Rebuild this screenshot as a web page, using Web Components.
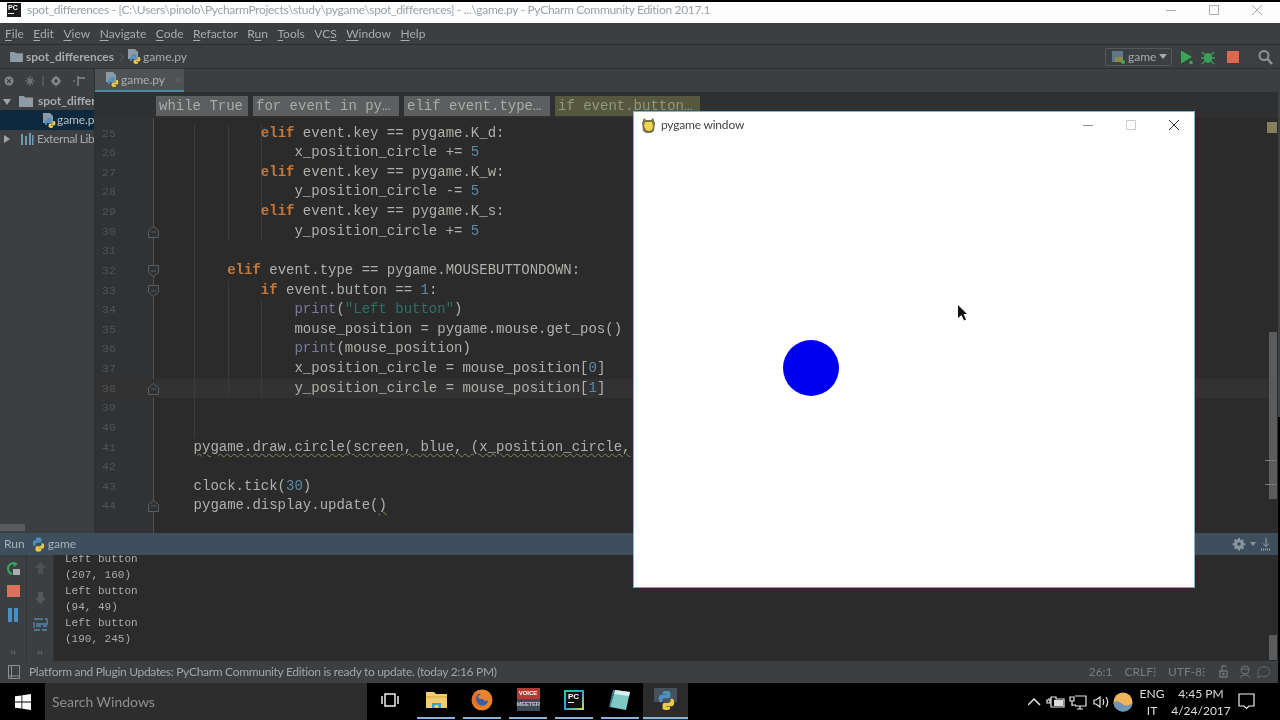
<!DOCTYPE html>
<html>
<head>
<meta charset="utf-8">
<title>PyCharm</title>
<style>
    html, body { margin: 0; padding: 0; background: #000; }
    body { width: 1280px; height: 720px; overflow: hidden; position: relative; font-family: Lato, "Open Sans", sans-serif; }
    #ide-main { display: flex; height: 464px; }
    #edge { position: absolute; left: 1278px; top: 92px; width: 2px; height: 591px; background: linear-gradient(#3f4143 55%, #000 55%); z-index: 5; }
</style>
</head>
<body>
    <ide-title></ide-title>
    <ide-menu></ide-menu>
    <ide-nav></ide-nav>
    <div id="ide-main">
        <ide-project></ide-project>
        <ide-editor></ide-editor>
    </div>
    <ide-run></ide-run>
    <ide-status></ide-status>
    <win-taskbar></win-taskbar>
    <pygame-window></pygame-window>
    <div id="edge"></div>

<script>
const define = (name, html) => {
    customElements.define(name, class extends HTMLElement {
        constructor(){
            super();
            const template = document.createElement('template');
            template.innerHTML = html;
            this.attachShadow({mode:'open'}).appendChild(template.content.cloneNode(true));
        }
    });
};

const uiFont = `Lato, "Open Sans", sans-serif`;
const monoFont = `"Liberation Mono", monospace`;

// small python logo, used all over the place
const pyLogo = (size) => `<svg width="${size}" height="${size}" viewBox="0 0 24 24" style="display:block;flex:none">
    <path fill="#4f8fc0" d="M11.9 2C8 2 8.2 3.7 8.2 3.7V5.5H12v.5H6.7S4 5.7 4 9.9s2.3 4 2.3 4h1.4v-2s-.1-2.3 2.3-2.3h3.9s2.2 0 2.2-2.2V4.3S16.4 2 11.9 2z"/>
    <path fill="#e8c94a" d="M12.1 22c3.9 0 3.7-1.7 3.7-1.7v-1.8H12V18h5.3s2.7.3 2.7-3.9-2.3-4-2.3-4h-1.4v2s.1 2.3-2.3 2.3H10.1s-2.2 0-2.2 2.2v3.7S7.6 22 12.1 22z"/>
</svg>`;

const pyFile = `<svg width="16" height="17" viewBox="0 0 16 17" style="display:block;flex:none">
    <path fill="#8a9aa6" d="M2 1h7l3 3v7H2z"/>
    <path fill="#4f8fc0" d="M8 6c-2 0-2 1-2 1v1h2v.4H5s-1.400 0-1.400 2.300 1.300 2.300 1.300 2.300h1v-1.200s0-1.300 1.300-1.300h2s1.200 0 1.200-1.200V7.200S10 6 8 6z"/>
    <path fill="#e8c94a" d="M10 16c2 0 2-1 2-1v-1h-2v-.4h3s1.400 0 1.400-2.300-1.300-2.300-1.300-2.300h-1v1.200s0 1.300-1.300 1.300h-2s-1.200 0-1.200 1.200v2.100S8 16 10 16z"/>
</svg>`;

const folder = (w, h) => `<svg width="${w}" height="${h}" viewBox="0 0 14 12" style="display:block;flex:none">
    <path fill="#8f9ca6" d="M0 1h5l1 1.500h8V12H0z"/>
</svg>`;

const gear = (c, s) => `<svg width="${s}" height="${s}" viewBox="0 0 16 16" style="display:block;flex:none">
    <path fill="${c}" d="M7 1h2l.4 2 1.300.6 1.700-1.100 1.400 1.400-1.100 1.700.6 1.300 2 .4v2l-2 .4-.6 1.300 1.100 1.700-1.400 1.400-1.700-1.100-1.300.6-.4 2H7l-.4-2-1.300-.6-1.700 1.100-1.400-1.400 1.100-1.700-.6-1.300-2-.4V7l2-.4.6-1.300-1.100-1.700 1.400-1.400 1.700 1.100 1.300-.6z"/>
    <circle cx="8" cy="8" r="2" fill="#3f4e5d"/>
</svg>`;

define('ide-title', `
    <style>
        :host { display: block; height: 21px; margin-top: 2px; background: #fdfdfd; }
        #bar { display: flex; align-items: center; box-sizing: border-box; height: 100%; padding: 0 18px 6px 7px; font: 12px/1 ${uiFont}; color: #9aa3a8; filter: blur(.35px); }
        #logo { width: 14px; height: 14px; background: #1d1d1d; color: #fff; font: bold 7px/9px "Liberation Sans", sans-serif; margin-right: 6px; flex: none; }
        #logo span { display: block; padding-left: 1px; }
        #logo i { display: block; width: 6px; height: 1px; background: #fff; margin: 1px 0 0 1px; }
        #text { flex: 1; white-space: nowrap; letter-spacing: -.32px; }
        #bar svg { display: block; flex: none; }
    </style>
    <div id="bar">
        <div id="logo"><span>PC</span><i></i></div>
        <div id="text">spot_differences - [C:\\Users\\pinolo\\PycharmProjects\\study\\pygame\\spot_differences] - ...\\game.py - PyCharm Community Edition 2017.1</div>
        <svg width="96" height="12" viewBox="0 0 96 12" fill="none" stroke="#a9adb0">
            <path d="M0 6.500h10"/><path d="M43.500 1.500h9v9h-9z"/><path d="M86 1l10 10M96 1L86 11"/>
        </svg>
    </div>
`);

define('ide-menu', `
    <style>
        :host { display: block; height: 21px; background: #3c3f41; }
        #bar { display: flex; align-items: center; gap: 9.500px; height: 100%; padding-left: 5px; font: 12px/1 ${uiFont}; color: #a6abae; filter: blur(.3px); }
        u { text-decoration-thickness: 1px; text-underline-offset: 2px; }
    </style>
    <div id="bar">
        <span><u>F</u>ile</span><span><u>E</u>dit</span><span><u>V</u>iew</span><span><u>N</u>avigate</span><span><u>C</u>ode</span><span><u>R</u>efactor</span><span>R<u>u</u>n</span><span><u>T</u>ools</span><span>VC<u>S</u></span><span><u>W</u>indow</span><span><u>H</u>elp</span>
    </div>
`);

define('ide-nav', `
    <style>
        :host { display: block; height: 25px; box-sizing: border-box; background: #3c3f41; border-top: 1px solid #2a2c2d; border-bottom: 1px solid #2f3132; }
        #bar { display: flex; align-items: center; height: 100%; padding-left: 10px; font: 12px/1 ${uiFont}; color: #a6abae; filter: blur(.3px); }
        b { font-weight: 700; margin-left: 3px; }
        .chev { width: 5px; height: 5px; border: solid #50535a; border-width: 1px 1px 0 0; transform: rotate(45deg); margin: 0 3px; flex: none; }
        #crumb { margin-left: 1px; margin-right: auto; }
        #cfg { display: flex; align-items: center; gap: 3px; box-sizing: border-box; width: 67px; height: 18px; padding-left: 5px; border: 1px solid #55585a; border-radius: 2px; color: #a6abae; }
        #cfg i { width: 0; height: 0; border: 4px solid transparent; border-top: 5px solid #a6abae; border-bottom: 0; }
        #act { display: flex; align-items: center; margin-left: 6px; }
    </style>
    <div id="bar">
        ${folder(13,11)}
        <b>spot_differences</b>
        <span class="chev"></span>
        ${pyFile}
        <span id="crumb">game.py</span>
        <div id="cfg">
            <svg width="14" height="14" viewBox="0 0 14 14" style="display:block;flex:none"><rect x="1" y="1" width="11" height="11" fill="#5f7688"/><path d="M4 12V7h8v5z" fill="#8b8a4a"/><circle cx="12" cy="12" r="2" fill="#3fae4a"/></svg>
            <span>game</span><i></i>
        </div>
        <div id="act">
            <svg width="102" height="16" viewBox="0 0 102 16" style="display:block">
                <path d="M3 1.500l11 6.500-11 6.500z" fill="#3aa84e"/><circle cx="13" cy="13.500" r="1.800" fill="#3aa84e"/>
                <ellipse cx="30" cy="9" rx="4.200" ry="5" fill="#3c9f58"/><path d="M24 3l3 3M36 3l-3 3M23 9h3M34 9h3M24 15l3-3M36 15l-3-3" stroke="#3c9f58" stroke-width="1.300"/>
                <rect x="49" y="2" width="12" height="12" fill="#d9694f"/>
                <path d="M70 0v16" stroke="#4b4e50" stroke-dasharray="1 2"/>
                <circle cx="86" cy="6.500" r="4.500" fill="none" stroke="#8d9295" stroke-width="2"/><path d="M89.500 10l4.500 5" stroke="#8d9295" stroke-width="2.500"/>
            </svg>
        </div>
    </div>
`);

define('ide-project', `
    <style>
        :host { display: flex; flex-direction: column; width: 95px; flex: none; background: #3c3f41; overflow: hidden; font: 12px/1 ${uiFont}; color: #a6abae; border-right: 1px solid #2f3132; box-sizing: border-box; }
        #tools { display: flex; align-items: center; height: 23px; flex: none; gap: 5px; padding-left: 2px; }
        #tree { flex: 1; filter: blur(.3px); white-space: nowrap; }
        .row { display: flex; align-items: center; height: 18px; }
        .sel { background: #0d293e; color: #b8bfc4; height: 20px; padding-left: 41px; }
        .tri { width: 0; height: 0; flex: none; }
        .down { border: 4px solid transparent; border-top: 6px solid #a0a5a8; border-bottom: 0; margin: 2px 8px 0 3px; }
        .right { border: 4px solid transparent; border-left: 6px solid #a0a5a8; border-right: 0; margin: 0 10px 0 4px; }
        b { font-weight: 700; }
        #foot { height: 9px; flex: none; }
        #foot i { display: block; width: 25px; height: 7px; background: #585b5d; }
    </style>
    <div id="tools">
        <svg width="88" height="16" viewBox="0 0 88 16" fill="none" stroke="#83888b" style="display:block">
            <circle cx="7" cy="8" r="4.500" fill="#83888b" stroke="none"/><path d="M5 6l4 4M9 6l-4 4" stroke="#3c3f41" stroke-width="1.200"/>
            <path d="M28 3v10M23 8h10M25 5l6 6M31 5l-6 6" stroke-width="1.200" opacity=".75"/>
            <path d="M41 3v10" stroke="#6a6e70"/>
            <circle cx="54" cy="8" r="3" stroke-width="2.500"/><path d="M54 2.500v2M54 11.500v2M48.500 8h2M57.500 8h2"/>
            <path d="M76 3v10M76 5h7" stroke-width="1.400"/>
            <path d="M73 8h-2" />
        </svg>
    </div>
    <div id="tree">
        <div class="row"><i class="tri down"></i>${folder(14,12)}<b style="margin-left:5px">spot_differ</b></div>
        <div class="row sel">${pyFile}<span style="margin-left:0;letter-spacing:-.1px">game.p</span></div>
        <div class="row"><i class="tri right"></i><svg width="14" height="12" viewBox="0 0 14 12" style="display:block;flex:none;margin-right:3px"><path d="M1 1h2v11H1zM5 3h2v9H5zM9 0h2v12H9zM12 2h1.500v10H12z" fill="#6f97ad"/></svg><span style="letter-spacing:-.4px">External Lib</span></div>
    </div>
    <div id="foot"><i></i></div>
`);

define('ide-tabs', `
    <style>
        :host { display: block; height: 23px; background: #3c3f41; }
        #tab { display: flex; align-items: center; box-sizing: border-box; width: 89px; height: 23px; padding-left: 9px; background: #4e5254; border-bottom: 2px solid #4a88a8; font: 12px/1 ${uiFont}; color: #a9aeb1; filter: blur(.3px); }
        span { margin-left: 1px; }
        svg.x { margin-left: 9px; }
    </style>
    <div id="tab">${pyFile}<span>game.py</span>
        <svg class="x" width="8" height="8" viewBox="0 0 8 8" stroke="#63676a"><path d="M1 1l6 6M7 1L1 7"/></svg>
    </div>
`);

define('ide-crumb', `
    <style>
        :host { display: block; height: 20px; box-sizing: border-box; padding: 0 3px; background: var(--crumb-bg, #5c5e5f); color: var(--crumb-fg, #a7adaa); font: 14px/21px ${monoFont}; white-space: nowrap; }
    </style>
    <slot></slot>
`);

// every code line: [number, fold marker, guides, html]
const kw = (t) => `<b class="k">${t}</b>`, num = (t) => `<span class="n">${t}</span>`;
const lines = [
    [25, '', 3, `            ${kw('elif')} event.key == pygame.K_d:`],
    [26, '', 3, `                x_position_circle += ${num(5)}`],
    [27, '', 3, `            ${kw('elif')} event.key == pygame.K_w:`],
    [28, '', 3, `                y_position_circle -= ${num(5)}`],
    [29, '', 3, `            ${kw('elif')} event.key == pygame.K_s:`],
    [30, 'u', 3, `                y_position_circle += ${num(5)}`],
    [31, '', 1, ``],
    [32, 'd', 1, `        ${kw('elif')} event.type == pygame.MOUSEBUTTONDOWN:`],
    [33, 'd', 2, `            ${kw('if')} event.button == ${num(1)}:`],
    [34, '', 3, `                <span class="p">print</span>(<span class="s">"Left button"</span>)`],
    [35, '', 3, `                mouse_position = pygame.mouse.get_pos()`],
    [36, '', 3, `                <span class="p">print</span>(mouse_position)`],
    [37, '', 3, `                x_position_circle = mouse_position[${num(0)}]`],
    [38, 'u', 3, `                y_position_circle = mouse_position[${num(1)}]`],
    [39, '', 1, ``],
    [40, '', 1, ``],
    [41, '', 0, `    <span class="w">pygame.draw.circle(screen, blue, (x_position_circle,</span>`],
    [42, '', 0, ``],
    [43, '', 0, `    clock.tick(${num(30)})`],
    [44, 'u', 0, `    pygame.display.update(<span class="w">)</span>`],
];
const guideBg = (n) => {
    const g = [34, 67.500, 101].slice(0, n);
    return g.map(x => `linear-gradient(#3a3b3c,#3a3b3c) ${x}px 0/1px 100% no-repeat`).join(',') || 'none';
};
const foldMark = (f) => f ? `<svg class="f" width="11" height="12" viewBox="0 0 11 12" fill="#2f3132" stroke="#5a5e60"><path d="${f == 'u' ? 'M.5 11.500v-7l5-4 5 4v7z' : 'M.5 .5h10v7l-5 4-5-4z'}"/><path d="M3 6h5"/></svg>` : '';
const codeHtml = lines.map(([n, f, g, html]) => `
    <div class="line${n == 38 ? ' cur' : ''}">
        <div class="num">${n}</div>
        <div class="fold">${foldMark(f)}</div>
        <div class="code" style="background:${guideBg(g)}">${html}</div>
    </div>`).join('');

define('ide-code', `
    <style>
        :host { display: block; position: relative; flex: 1; overflow: hidden; padding-top: 5.500px; background: #2b2b2b; font: 14px/19.630px ${monoFont}; color: #aeb1ab; }
        :host::before { content: ""; position: absolute; left: 0; top: 0; bottom: 0; width: 59px; background: #303234; }
        :host::after { content: ""; position: absolute; left: 58px; top: 0; bottom: 0; width: 1px; background: #505355; }
        #lines { position: relative; z-index: 1; filter: blur(.35px); }
        .line { display: flex; height: 19.630px; }
        .cur { background: #323232; }
        .num { width: 44px; flex: none; box-sizing: border-box; padding-left: 7px; font-size: 11.500px; line-height: 17px; padding-top: 1px; color: #505456; }
        .fold { width: 21px; flex: none; position: relative; }
        .f { position: absolute; left: 9px; top: 4px; z-index: 2; }
        .code { flex: 1; white-space: pre; }
        .k { color: #c4773a; font-weight: bold; }
        .n { color: #5f8ba8; }
        .p { color: #7a7a9a; }
        .s { color: #2a7268; }
        .w { text-decoration: underline wavy #84845a 1px; text-underline-offset: 2px; }
        #mark { position: absolute; right: 3px; top: 4px; width: 10px; height: 11px; background: #857f5c; z-index: 3; }
        #thumb { position: absolute; right: 3px; top: 214px; width: 8px; height: 167px; background: #5a5b5c; z-index: 3; }
        #thumb i { display: block; position: absolute; left: -4px; width: 12px; height: 1px; background: #7a7b7c; }
    </style>
    <div id="lines">${codeHtml}</div>
    <div id="mark"></div>
    <div id="thumb"><i style="top:128px"></i><i style="top:152px"></i></div>
`);

define('ide-editor', `
    <style>
        :host { display: flex; flex-direction: column; flex: 1; min-width: 0; background: #2b2b2b; }
        #crumbs { display: flex; gap: 5px; height: 26px; box-sizing: border-box; padding: 4px 0 0 61px; flex: none; background: #2e3031; filter: blur(.35px); }
    </style>
    <ide-tabs></ide-tabs>
    <div id="crumbs">
        <ide-crumb style="width:92px">while True</ide-crumb>
        <ide-crumb style="width:146px">for event in py…</ide-crumb>
        <ide-crumb style="width:146px">elif event.type…</ide-crumb>
        <ide-crumb style="width:145px;--crumb-bg:#55573f;--crumb-fg:#94977f">if event.button…</ide-crumb>
    </div>
    <ide-code></ide-code>
`);

define('ide-run', `
    <style>
        :host { display: flex; flex-direction: column; height: 128px; background: #2b2b2b; }
        #head { display: flex; align-items: center; height: 22px; flex: none; padding: 0 8px 0 4px; background: #3f4e5d; font: 12px/1 ${uiFont}; color: #a6b0b8; filter: blur(.3px); }
        #head span:nth-child(2) { margin: 0 1px 0 5px; }
        #right { margin-left: auto; display: flex; align-items: center; gap: 4px; }
        #right i { width: 0; height: 0; border: 3px solid transparent; border-top: 4px solid #8a949c; border-bottom: 0; }
        #body { display: flex; flex: 1; min-height: 0; }
        .col { display: flex; flex-direction: column; align-items: center; box-sizing: border-box; width: 27px; flex: none; background: #3c3f41; border-right: 1px solid #333; padding-top: 6px; gap: 7px; }
        .col .more { margin-top: auto; margin-bottom: 5px; font: 10px/10px ${uiFont}; color: #7e8386; }
        #out { flex: 1; position: relative; overflow: hidden; font: 11px/16px ${monoFont}; color: #a9aca6; filter: blur(.3px); }
        #text { margin: -4px 0 0 11px; white-space: pre; }
        #thumb { position: absolute; right: 3px; bottom: 1px; width: 8px; height: 25px; background: #5a5b5c; }
    </style>
    <div id="head">
        <span>Run</span><span>${pyLogo(17)}</span><span>game</span>
        <div id="right">
            ${gear('#8a949c', 14)}<i></i>
            <svg width="12" height="14" viewBox="0 0 12 14" stroke="#9aa3aa" fill="none" style="display:block"><path d="M6 1v8M3 6.500L6 9.500l3-3"/><path d="M1 12.500h10" stroke-width="2" stroke-dasharray="1 1"/></svg>
        </div>
    </div>
    <div id="body">
        <div class="col">
            <svg width="16" height="16" viewBox="0 0 16 16" fill="none" style="display:block"><path d="M12 3.500A5.500 5.500 0 1 0 7 13" stroke="#3aa35c" stroke-width="2.200"/><path d="M8.500 1v5l4-2.500z" fill="#3aa35c"/><rect x="8" y="8" width="7" height="6" fill="#a9aeb1"/></svg>
            <svg width="13" height="13" viewBox="0 0 13 13" style="display:block;margin-top:1px"><rect width="13" height="12" fill="#d9735c"/></svg>
            <svg width="12" height="14" viewBox="0 0 12 14" style="display:block;margin-top:3px"><path d="M1 0h4v14H1zM7 0h4v14H7z" fill="#4a8fbf"/></svg>
            <span class="more">››</span>
        </div>
        <div class="col">
            <svg width="13" height="14" viewBox="0 0 13 14" style="display:block"><path d="M6.500 1L12 7H9v6H4V7H1z" fill="#4d5153"/></svg>
            <svg width="13" height="14" viewBox="0 0 13 14" style="display:block;margin-top:9px"><path d="M6.500 13L12 7H9V1H4v6H1z" fill="#55595b"/></svg>
            <svg width="15" height="14" viewBox="0 0 15 14" fill="none" stroke="#4f89ad" stroke-width="1.300" style="display:block;margin-top:6px"><path d="M1 1h9M12 1h2v5H3M1 4v6M3 8h5M10 8h4M1 12h6M9 12h5"/></svg>
            <span class="more">››</span>
        </div>
        <div id="out"><div id="text">Left button
(207, 160)
Left button
(94, 49)
Left button
(190, 245)</div><div id="thumb"></div></div>
    </div>
`);

define('ide-status', `
    <style>
        :host { display: flex; align-items: center; height: 22px; padding: 0 0 0 8px; background: #3c3f41; font: 12px/1 ${uiFont}; color: #8f9598; filter: blur(.3px); }
        #msg { margin-left: 9px; color: #a0a5a8; white-space: nowrap; letter-spacing: -.31px; }
        #right { margin-left: auto; display: flex; align-items: center; gap: 12px; padding-right: 6px; color: #777c7f; }
        #right svg { display: block; }
    </style>
    <svg width="12" height="14" viewBox="0 0 12 14" fill="none" stroke="#8a8f92" style="display:block;flex:none"><path d="M.5 .5h11v13H.5zM3.500 .5v13M.5 11h11"/></svg>
    <span id="msg">Platform and Plugin Updates: PyCharm Community Edition is ready to update. (today 2:16 PM)</span>
    <div id="right">
        <span>26:1</span><span>CRLF⁝</span><span>UTF-8⁝</span>
        <svg width="56" height="14" viewBox="0 0 56 14" fill="none" stroke="#6e7376" style="margin-left:1px"><path d="M2 6h7v6H2zM4 6V3a2 2 0 0 1 4-1" stroke-width="1.300"/><circle cx="5.500" cy="9" r="1" fill="#6e7376"/><g transform="translate(4)"><circle cx="23" cy="5" r="4"/><path d="M19 4h8M18 13c1-4 9-4 10 0"/><path d="M36 6.500a6 5 0 1 1 3 4.500l-3 2z" opacity=".8"/></g></svg>
    </div>
`);

define('win-taskbar', `
    <style>
        :host { display: flex; align-items: stretch; height: 37px; background: #000; font: 12px/1 ${uiFont}; color: #dcdcdc; }
        #start { display: flex; align-items: center; justify-content: center; width: 45px; flex: none; }
        #search { display: flex; align-items: center; box-sizing: border-box; width: 322px; flex: none; padding-left: 7px; background: #2d2d2d; color: #8f8f8f; font-size: 14px; filter: blur(.3px); }
        #apps { display: flex; filter: blur(.3px); }
        .app { display: flex; align-items: center; justify-content: center; box-sizing: border-box; width: 46px; flex: none; padding-bottom: 4px; position: relative; }
        .app.on::after { content: ""; position: absolute; left: 4px; right: 4px; bottom: 1px; height: 2px; background: #8fb3d4; }
        .app.active { background: #2b2b2b; width: 45px; }
        .app.active::after { left: 0; right: 0; }
        #tray { margin-left: auto; display: flex; align-items: center; filter: blur(.3px); }
        #lang { width: 36px; text-align: center; line-height: 17px; margin-left: 1px; }
        #clock { width: 62px; text-align: center; line-height: 17px; }
        #note { margin: 0 25px 0 6px; }
        svg { display: block; }
    </style>
    <div id="start">
        <svg width="16" height="16" viewBox="0 0 16 16" fill="#fff"><path d="M0 2.300l6.500-.9v6.200H0zM7.300 1.300L16 0v7.600H7.300zM0 8.400h6.500v6.200L0 13.700zM7.300 8.400H16V16l-8.700-1.200z"/></svg>
    </div>
    <div id="search">Search Windows</div>
    <div id="apps">
        <div class="app">
            <svg width="20" height="18" viewBox="0 0 20 18" fill="none" stroke="#eee" stroke-width="1.500"><path d="M5 3h10v12H5zM2 5v8M18 5v8"/></svg>
        </div>
        <div class="app on">
            <svg width="21" height="18" viewBox="0 0 21 18"><path d="M0 1h8l2 2h11v14H0z" fill="#f2cd6a"/><rect y="5" width="21" height="2" fill="#e8b94a"/><path d="M6 12h9v5H6z" fill="#3b9fd8"/><path d="M8.500 14h4v3h-4z" fill="#f2cd6a"/></svg>
        </div>
        <div class="app on">
            <svg width="22" height="22" viewBox="0 0 22 22"><circle cx="11" cy="11" r="10.500" fill="#e0702a"/><circle cx="11.500" cy="10" r="6.500" fill="#3b5f9e"/><path d="M2 5c3-4 9-5 12-4 4 1 7 5 7 10 0 6-5 10-10 10S1 17 1 11c1 5 5 7 9 7s7-3 7-7c-2 2-4 1-5-1-2 0-4 0-5-2 0-1 2-2 3-3-2-1-6-1-8 0z" fill="#e8842e"/></svg>
        </div>
        <div class="app on">
            <div style="width:23px;height:23px;font:bold 6px/11px 'Liberation Sans',sans-serif;text-align:center;color:#fff">
                <div style="background:#b83a34;height:11px">VOICE</div>
                <div style="background:#3d4a58;height:12px;color:#c5c9cc;letter-spacing:-.3px">MEETER</div>
            </div>
        </div>
        <div class="app on">
            <div style="box-sizing:border-box;width:20px;height:20px;padding:2px;background:linear-gradient(135deg,#24d4a0,#2aa1d8 50%,#d4e23c)">
                <div style="height:16px;background:#111;color:#fff;font:bold 8px/9px 'Liberation Sans',sans-serif;padding-left:2px;box-sizing:border-box">PC<div style="width:6px;height:1px;background:#fff;margin-top:1px"></div></div>
            </div>
        </div>
        <div class="app on">
            <svg width="22" height="22" viewBox="0 0 22 22"><path d="M6 1l15 2-4 18L1 18z" fill="#7fc8c4"/><path d="M6 1l15 2-1 4L5 5z" fill="#d8eeee"/><path d="M1 18c2-6 3-10 5-17l-2 0L0 17z" fill="#3d7f8c"/></svg>
        </div>
        <div class="app on active">
            <div style="position:relative;width:24px;height:24px">
                <div style="position:absolute;left:0;top:0;width:23px;height:14px;background:#45525c"></div>
                <div style="position:absolute;left:1px;top:1px">${pyLogo(23)}</div>
            </div>
        </div>
    </div>
    <div id="tray">
        <svg width="85" height="18" viewBox="0 0 85 18" fill="none" stroke="#e8e8e8" stroke-width="1.200">
            <path d="M0 12l6-6 6 6" stroke-width="1.500"/>
            <g transform="translate(-2)"><path d="M22 6h3V4h5v2h8v8H25V6"/><path d="M28 7h9v6h-9z" fill="#dcdcdc" stroke="none"/><path d="M21 7h3v3h-3z"/></g>
            <g transform="translate(-8)"><path d="M50 4h4v4h-4zM52 8v5M52 12h4M55 3h11v10H55M60 13v3M57 16h6"/></g>
            <g transform="translate(-10)"><path d="M76 7h2l4-3v10l-4-3h-2zM85 6c1 2 1 4 0 6M88 4c2 3 2 7 0 10"/></g>
        </svg>
        <svg width="20" height="20" viewBox="0 0 20 20"><circle cx="10" cy="10" r="9.500" fill="#f0b45a"/><path d="M.5 11c3-3 5-2 9 1s7 1 10-1c-.5 5-4.500 8.500-9.500 8.500S1 15.500.5 11z" fill="#6f94b8"/></svg>
        <div id="lang">ENG<br>IT</div>
        <div id="clock">4:45 PM<br>4/24/2017</div>
        <svg id="note" width="17" height="17" viewBox="0 0 17 17" fill="none" stroke="#f0f0f0" stroke-width="1.200"><path d="M1 1h15v12H11l-2.500 2.500L6 13H1z"/></svg>
    </div>
`);

define('pygame-window', `
    <style>
        :host { display: block; position: absolute; z-index: 10; left: 633px; top: 111px; width: 562px; height: 477px; box-sizing: border-box; background: #fff; border: 1px solid #7db5d6; border-bottom-color: #6fa6c6; font: 12px/1 ${uiFont}; color: #444; }
        #bar { display: flex; align-items: center; height: 26px; padding-left: 7px; }
        #txt { margin-left: 5px; filter: blur(.25px); letter-spacing: -.2px; }
        #ctl { margin-left: auto; margin-right: 15px; display: block; }
        #circle { position: absolute; left: 149px; top: 228px; width: 56px; height: 56px; border-radius: 50%; background: #0000f0; }
        #cursor { position: absolute; left: 324px; top: 193px; }
    </style>
    <div id="bar">
        <svg width="15" height="16" viewBox="0 0 15 16" style="display:block;flex:none"><path d="M3 1l2 2h5l2-2 2 5-1 8-3 2H5l-3-2-1-8z" fill="#7a7448"/><path d="M4 5h7l1 4-1 4-3 1-3-1-2-4z" fill="#f0d64e"/></svg>
        <span id="txt">pygame window</span>
        <svg id="ctl" width="96" height="12" viewBox="0 0 96 12" fill="none" stroke="#777"><path d="M0 6.500h10" stroke="#8a8a8a"/><path d="M43.500 1.500h9v9h-9z" stroke="#ccc"/><path d="M86 1l10 10M96 1L86 11" stroke="#333"/></svg>
    </div>
    <div id="circle"></div>
    <svg id="cursor" width="10" height="16" viewBox="0 0 10 16"><path d="M0 0l9 9H5.500l2.500 5.500-2 1L3.500 10 0 13z" fill="#111"/></svg>
`);
</script>
</body>
</html>
